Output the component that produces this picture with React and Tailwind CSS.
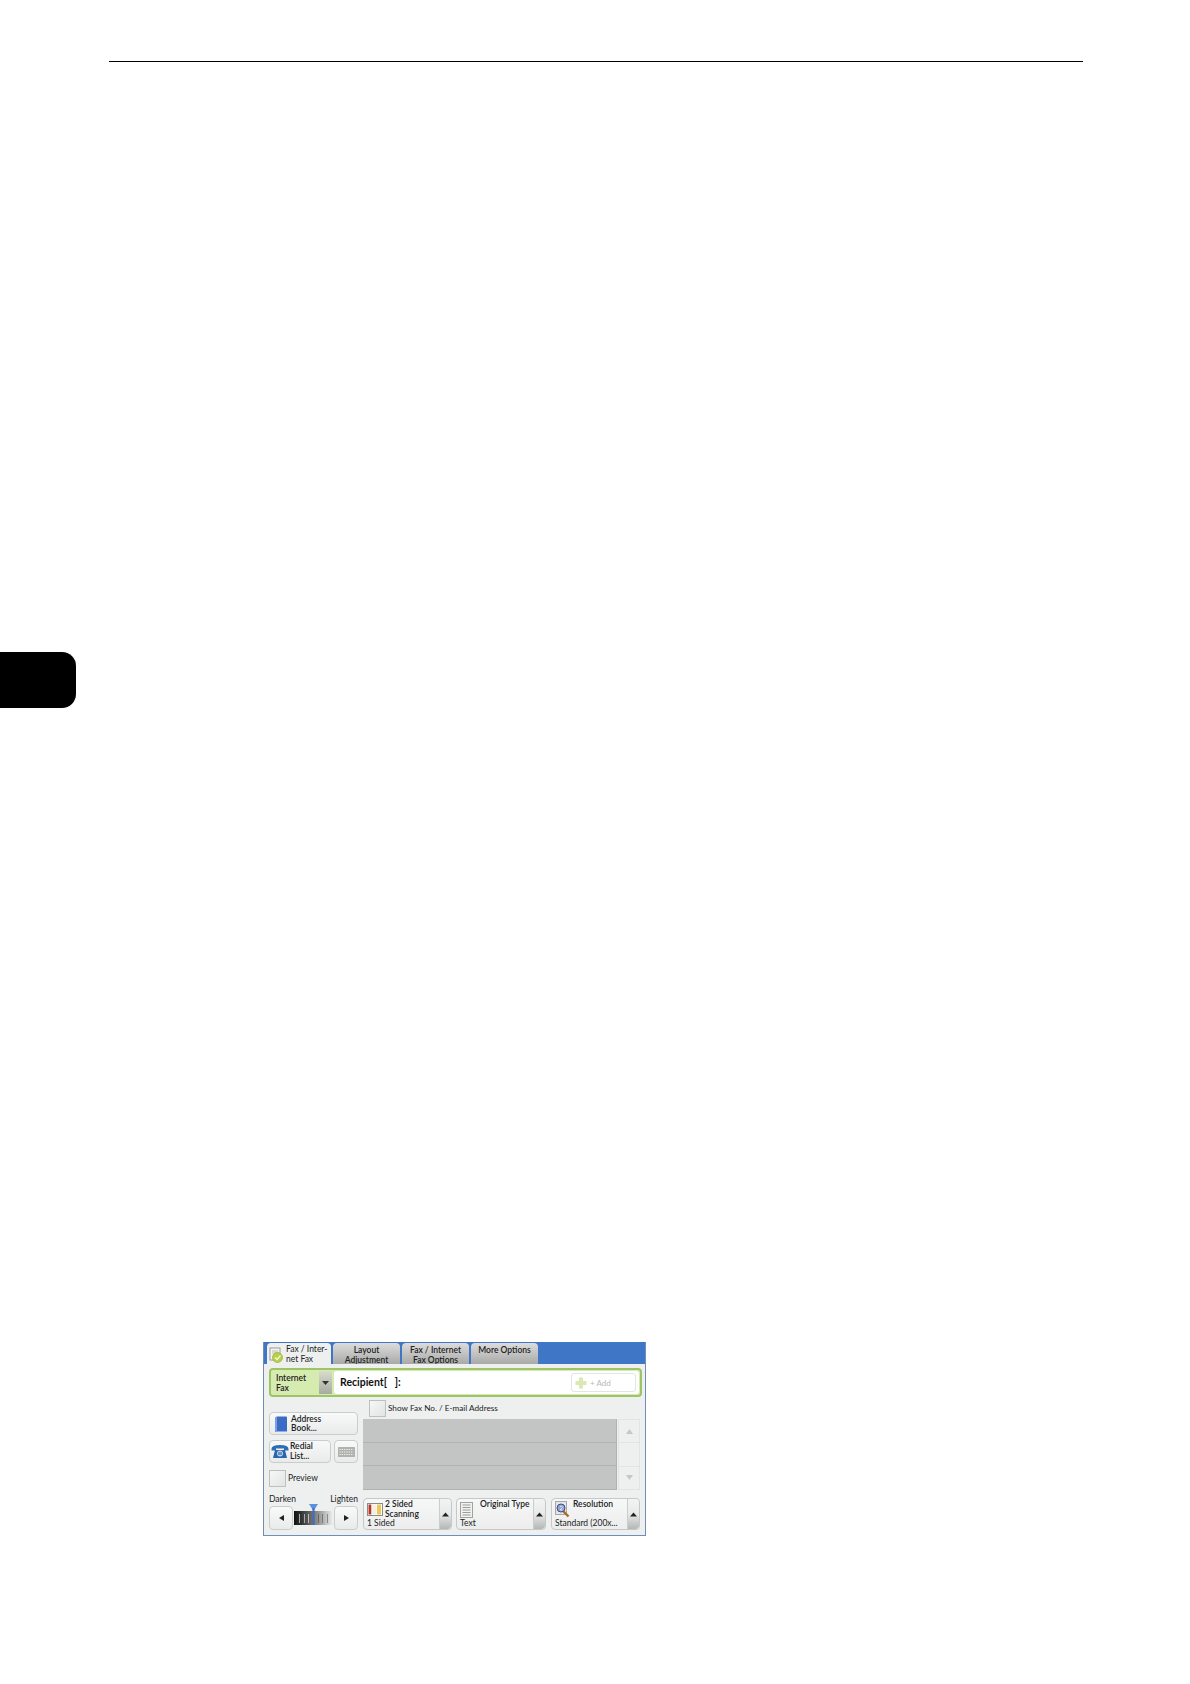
import React from "react";

const font = "font-['Lato','Open_Sans',sans-serif]";
const btn = "rounded-[4px] border border-[#c9cdcd] bg-gradient-to-b from-[#f8f9f9] to-[#e9ebeb]";

function Tab({ active, w, children, icon }) {
  return (
    <div
      className={
        "flex h-[21px] rounded-t-[4px] text-[8.5px] leading-[9.5px] text-[#222] " +
        w + " " +
        (active
          ? "items-center gap-[2px] bg-[#eef0f0] pl-[2px] pt-[2px]"
          : "justify-center bg-gradient-to-b from-[#dcdcdc] to-[#a9aaa8] pt-[3px] text-center font-semibold")
      }
    >
      {icon}
      <span>{children}</span>
    </div>
  );
}

function Check() {
  return <div className="h-[17px] w-[17px] shrink-0 border border-[#bcc0c0] bg-gradient-to-br from-[#f6f7f7] to-[#e2e4e4]" />;
}

function UpArrow() {
  return (
    <div className="flex w-[12px] shrink-0 items-center justify-center rounded-r-[4px] border-l border-[#c9cdcd] bg-gradient-to-b from-[#f2f3f3] via-[#e8e9e9] to-[#b5b7b7]">
      <svg width="7" height="5" viewBox="0 0 7 5"><path d="M3.5 0.5 L7 4.5 H0 Z" fill="#222" /></svg>
    </div>
  );
}

function Card({ w, icon, title, sub, gapClass }) {
  return (
    <div className={"flex h-[32px] overflow-hidden rounded-[4px] border border-[#c4c8c8] bg-gradient-to-b from-[#f6f7f7] to-[#ecedec] " + w}>
      <div className="flex min-w-0 flex-1 flex-col justify-between pb-[1px] pl-[3px] pt-[1px] text-[8.5px] leading-[9.5px] text-[#222]">
        <div className={"flex " + gapClass}>
          {icon}
          <span className="whitespace-nowrap font-semibold">{title}</span>
        </div>
        <span className="whitespace-nowrap">{sub}</span>
      </div>
      <UpArrow />
    </div>
  );
}

const TabIcon = (
  <svg width="15" height="17" viewBox="0 0 15 17" className="mt-[2px] shrink-0">
    <rect x="1" y="1" width="10" height="12" fill="#f4f4f2" stroke="#9a9a96" />
    <path d="M3 4h6M3 6h6" stroke="#bbb" />
    <circle cx="8.5" cy="10.5" r="5" fill="#b9cf45" stroke="#8ca32c" strokeWidth="0.6" />
    <path d="M6 10.5l2 2 3.5-4" stroke="#f6f8d8" strokeWidth="1.2" fill="none" />
  </svg>
);

const BookIcon = (
  <svg width="14" height="17" viewBox="0 0 14 17" className="shrink-0">
    <path d="M2 1.5 Q2 0.5 3 0.5 H12 Q13 0.5 13 1.5 V16 H3 Q1 16 1 14.5 Z" fill="#3a6cc6" />
    <rect x="1" y="1" width="2" height="15" fill="#7ba0e2" />
    <path d="M3 15.5 H13" stroke="#8fb0ea" />
  </svg>
);

const PhoneIcon = (
  <svg width="18" height="15" viewBox="0 0 18 15" className="shrink-0">
    <path d="M0.5 5 Q0.5 1 9 1 Q17.5 1 17.5 5 V6.5 H13 V4.5 H5 V6.5 H0.5 Z" fill="#2d6db5" />
    <path d="M4 6 H14 L16 14 H2 Z" fill="#2a66ae" />
    <circle cx="9" cy="9.5" r="3" fill="#bcd3ec" />
    <path d="M8 8v3M10 8v3" stroke="#1d4f8d" />
  </svg>
);

const KeyboardIcon = (
  <svg width="17" height="10" viewBox="0 0 17 10">
    <rect width="17" height="10" rx="0.5" fill="#b0b2b0" />
    <path d="M1.5 2.5h14M1.5 5h14M1.5 7.5h14" stroke="#eeeeec" strokeWidth="1.1" strokeDasharray="1.3 1" />
  </svg>
);

const SidedIcon = (
  <svg width="16" height="13" viewBox="0 0 16 13" className="mt-[3px] shrink-0">
    <rect x="0.5" y="0.5" width="15" height="12" fill="#fff" stroke="#8a8a8a" />
    <rect x="1.5" y="1.5" width="3" height="10" fill="#b9342c" />
    <rect x="4.5" y="1.5" width="5" height="10" fill="#f3efe6" />
    <rect x="10" y="1.5" width="4" height="10" fill="#edc653" />
  </svg>
);

const DocIcon = (
  <svg width="13" height="16" viewBox="0 0 13 16" className="mt-[2px] shrink-0">
    <rect x="0.5" y="0.5" width="12" height="15" fill="#f2f2f0" stroke="#a0a2a0" />
    <path d="M2.5 3h8M2.5 5.5h8M2.5 8h8M2.5 10.5h8M2.5 13h8" stroke="#9b9d9b" />
  </svg>
);

const ResolutionIcon = (
  <svg width="15" height="17" viewBox="0 0 15 17" className="mt-[1px] shrink-0">
    <rect x="0.5" y="0.5" width="11" height="13" fill="#e3e5ea" stroke="#a8a8ac" />
    <path d="M8 10 L13.5 15.5" stroke="#b06a22" strokeWidth="2.4" />
    <circle cx="6" cy="7" r="4" fill="#8ea4d8" stroke="#48506e" />
    <path d="M5 5.5 Q7 4.5 7.5 6.5 L5 9 H7.5" stroke="#eef" strokeWidth="0.8" fill="none" />
  </svg>
);

export default function App() {
  return (
    <div className={"min-h-[1684px] bg-white " + font}>
      <div className="pt-[61px]">
        <div className="ml-[109px] h-[1px] w-[974px] bg-black" />
      </div>

      <div className="mt-[590px] h-[56px] w-[76px] rounded-r-[14px] bg-black" />

      <div className="ml-[263px] mt-[634px] flex h-[194px] w-[383px] flex-col border-b border-l border-r border-[#6f8fb8]">
        {/* tabs */}
        <div className="flex h-[22px] shrink-0 items-end gap-[2px] bg-[#4076c6] pl-[3px]">
          <Tab active w="w-[64px]" icon={TabIcon}>Fax / Inter-<br />net Fax</Tab>
          <Tab w="w-[67px]">Layout<br />Adjustment</Tab>
          <Tab w="w-[67px]">Fax / Internet<br />Fax Options</Tab>
          <Tab w="w-[67px]">More Options</Tab>
        </div>

        {/* body */}
        <div className="flex flex-1 flex-col bg-[#eef0f0] pb-[5px] pl-[5px] pr-[5px] pt-[4px] text-[8.5px] text-[#222]">
          {/* recipient bar */}
          <div className="flex h-[29px] w-[373px] shrink-0 items-center rounded-[4px] border-2 border-[#9dc467] bg-[#d6ebb0] pl-[5px] pr-[1px]">
            <div className="w-[43px] font-semibold leading-[10px]">Internet<br />Fax</div>
            <div className="flex h-[23px] w-[13px] items-center justify-center bg-gradient-to-b from-[#d7dccb] to-[#a7aca0]">
              <svg width="7" height="4" viewBox="0 0 7 4"><path d="M0 0H7L3.5 4Z" fill="#333" /></svg>
            </div>
            <div className="ml-[2px] flex h-[23px] flex-1 items-center justify-between rounded-[3px] bg-white pl-[6px] pr-[3px]">
              <span className="text-[10.5px] font-bold text-[#111]">Recipient[&nbsp;&nbsp;&nbsp;]:</span>
              <div className="flex h-[19px] w-[65px] items-center gap-[3px] rounded-[3px] border border-[#e2e5e2] pl-[3px] text-[8px] text-[#b5b8b5]">
                <svg width="12" height="12" viewBox="0 0 12 12"><path d="M4 0.5h4v3.5h3.5v4H8v3.5H4V8H0.5V4H4Z" fill="#dbe8b4" /></svg>
                + Add
              </div>
            </div>
          </div>

          {/* middle */}
          <div className="mt-[2px] flex h-[91px] shrink-0">
            <div className="flex w-[89px] shrink-0 flex-col pt-[13px]">
              <div className={"flex h-[23px] items-center gap-[3px] pl-[4px] pt-[1px] font-semibold leading-[9.5px] " + btn}>
                {BookIcon}
                <span>Address<br />Book...</span>
              </div>
              <div className="mt-[5px] flex h-[23px] gap-[3px]">
                <div className={"flex w-[62px] items-center gap-[1px] pl-[1px] font-semibold leading-[9.5px] " + btn}>
                  {PhoneIcon}
                  <span>Redial<br />List...</span>
                </div>
                <div className={"flex w-[24px] items-center justify-center " + btn}>{KeyboardIcon}</div>
              </div>
              <div className="mt-[7px] flex items-center gap-[2px]">
                <Check />
                <span>Preview</span>
              </div>
            </div>

            <div className="ml-[5px] flex flex-1 flex-col">
              <div className="mt-[1px] flex h-[17px] shrink-0 items-center gap-[2px] pl-[6px]">
                <Check />
                <span className="text-[8.2px]">Show Fax No. / E-mail Address</span>
              </div>
              <div className="mt-[2px] flex h-[71px]">
                <div className="flex w-[254px] flex-col gap-[1px] border-b border-r border-[#b0b2b2] bg-[#b2b3b3]">
                  <div className="flex-1 bg-[#c3c4c4]" />
                  <div className="flex-1 bg-[#c3c4c4]" />
                  <div className="flex-1 bg-[#c3c4c4]" />
                </div>
                <div className="ml-[1px] flex w-[22px] flex-col border border-[#e2e4e4]">
                  <div className="flex flex-1 items-center justify-center">
                    <svg width="7" height="5" viewBox="0 0 7 5"><path d="M3.5 0L7 5H0Z" fill="#c6c8c8" /></svg>
                  </div>
                  <div className="flex-1 border-y border-[#e2e4e4]" />
                  <div className="flex flex-1 items-center justify-center">
                    <svg width="7" height="5" viewBox="0 0 7 5"><path d="M0 0H7L3.5 5Z" fill="#c6c8c8" /></svg>
                  </div>
                </div>
              </div>
            </div>
          </div>

          {/* bottom */}
          <div className="mt-[3px] flex flex-1 items-end">
            <div className="w-[89px] shrink-0">
              <div className="flex justify-between leading-[10px]">
                <span>Darken</span>
                <span>Lighten</span>
              </div>
              <div className="mt-[2px] flex h-[24px] items-center">
                <div className={"flex h-full w-[24px] shrink-0 items-center justify-center " + btn}>
                  <svg width="5" height="6" viewBox="0 0 5 6"><path d="M5 0V6L0 3Z" fill="#222" /></svg>
                </div>
                <div className="relative mx-[1px] h-[14px] flex-1 bg-gradient-to-r from-[#111] via-[#777] to-[#f0f0f0]">
                  <div className="flex h-full items-center justify-around px-[3px]">
                    <i className="h-[9px] w-[1px] bg-[#aaa]" /><i className="h-[9px] w-[1px] bg-[#aaa]" /><i className="h-[9px] w-[1px] bg-[#bbb]" /><i className="h-[9px] w-[1px] bg-[#ccc]" />
                    <i className="h-[9px] w-[1px] bg-[#666]" /><i className="h-[9px] w-[1px] bg-[#777]" /><i className="h-[9px] w-[1px] bg-[#888]" />
                  </div>
                  <svg className="absolute left-[15px] top-[-7px]" width="9" height="21" viewBox="0 0 9 21">
                    <path d="M0 0H9L4.5 7Z" fill="#5b8fe0" />
                    <rect x="3.5" y="4" width="2" height="17" fill="#3a6fc2" />
                  </svg>
                </div>
                <div className={"flex h-full w-[24px] shrink-0 items-center justify-center " + btn}>
                  <svg width="5" height="6" viewBox="0 0 5 6"><path d="M0 0V6L5 3Z" fill="#222" /></svg>
                </div>
              </div>
            </div>

            <div className="ml-[5px] flex">
              <Card w="w-[89px]" icon={SidedIcon} title={<>2 Sided<br />Scanning</>} sub="1 Sided" gapClass="gap-[2px]" />
              <Card w="ml-[4px] w-[90px]" icon={DocIcon} title="Original Type" sub="Text" gapClass="gap-[7px]" />
              <Card w="ml-[5px] w-[89px]" icon={ResolutionIcon} title="Resolution" sub="Standard (200x..." gapClass="gap-[3px]" />
            </div>
          </div>
        </div>
      </div>
    </div>
  );
}
